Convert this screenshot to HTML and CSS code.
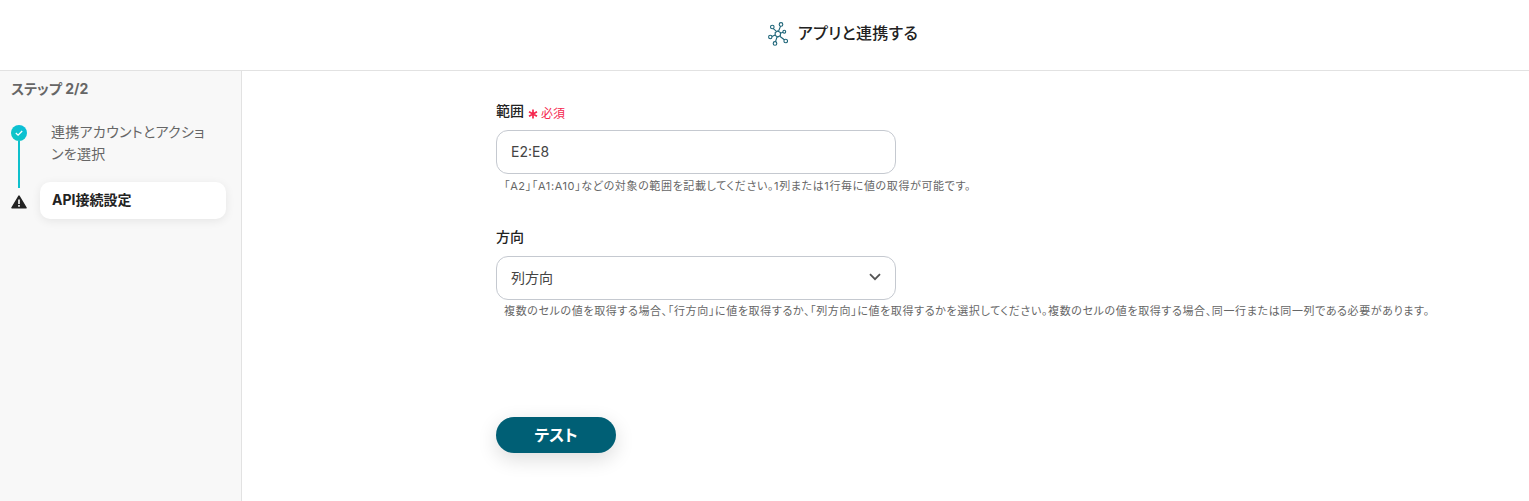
FILE: index.html
```html
<!DOCTYPE html>
<html lang="ja">
<head>
   <meta charset="UTF-8">
   <title>アプリと連携する</title>
   <link rel="stylesheet" href="styles.css">
</head>
<body>
   <header class="header">
       <svg class="header-icon" width="20" height="24" viewBox="0 0 20 24" fill="none" stroke="#1d6478" stroke-width="1.1">
           <path d="M9.8 9 12.4 10.5V13.5L9.8 15 7.2 13.5V10.5Z"/>
           <circle cx="13" cy="2.4" r="1.8"/>
           <circle cx="4.3" cy="5" r="1.8"/>
           <circle cx="16.3" cy="9.7" r="1.4"/>
           <circle cx="17.7" cy="19" r="1.8"/>
           <circle cx="7" cy="21.4" r="1.8"/>
           <circle cx="2.3" cy="15" r="1.7"/>
           <path d="M10.6 9 12.6 4.1M8.5 9.4 5.3 6.6M12.4 11.2 15 10.2M11.8 14.2 16.3 17.8M9 15 7.5 19.7M7.2 13 3.9 14.5"/>
       </svg>
       <span class="header-title">アプリと連携する</span>
   </header>
   <div class="page">
       <aside class="sidebar">
           <div class="step-count">ステップ 2/2</div>
           <ol class="steps">
               <li class="step step-done">
                   <span class="step-mark">
                       <svg width="16" height="16" viewBox="0 0 16 16">
                           <defs>
                               <linearGradient id="done-fill" x1="0" y1="1" x2="1" y2="0">
                                   <stop offset="0" stop-color="#0cc8c0"/>
                                   <stop offset="1" stop-color="#0cbcdc"/>
                               </linearGradient>
                           </defs>
                           <circle cx="8" cy="8" r="8" fill="url(#done-fill)"/>
                           <path d="M4.8 8 7.1 10.2 11.2 6" fill="none" stroke="#fff" stroke-width="1.3"/>
                       </svg>
                   </span>
                   <span class="step-label">連携アカウントとアクションを選択</span>
               </li>
               <li class="step step-current">
                   <span class="step-mark">
                       <svg width="16" height="14" viewBox="0 0 16 14">
                           <path d="M8 1.2 15 12.8H1Z" fill="#222" stroke="#222" stroke-width="1.6" stroke-linejoin="round"/>
                           <path d="M7.2 4.4h1.6v4.6H7.2zM7.2 10h1.6v1.7H7.2z" fill="#fff"/>
                       </svg>
                   </span>
                   <span class="step-label">API接続設定</span>
               </li>
           </ol>
       </aside>
       <main class="main">
           <div class="field">
               <div class="field-label">範囲
                   <svg class="required-mark" width="10" height="10" viewBox="0 0 10 10" fill="none" stroke="#f5284f" stroke-width="1.7"><path d="M5 .5v9M1 2.7l8 4.6M9 2.7 1 7.3"/></svg>
                   <span class="required">必須</span>
               </div>
               <div class="control">E2:E8</div>
               <p class="help help-range">「A2」「A1:A10」などの対象の範囲を記載してください。1列または1行毎に値の取得が可能です。</p>
           </div>
           <div class="field field-direction">
               <div class="field-label">方向</div>
               <div class="control control-select">
                   <span>列方向</span>
                   <svg width="12" height="8" viewBox="0 0 12 8" fill="none" stroke="#555" stroke-width="1.8"><path d="M1 1.2 6 6.2 11 1.2"/></svg>
               </div>
               <p class="help">複数のセルの値を取得する場合、「行方向」に値を取得するか、「列方向」に値を取得するかを選択してください。複数のセルの値を取得する場合、同一行または同一列である必要があります。</p>
           </div>
           <button class="test-button">テスト</button>
       </main>
   </div>
</body>
</html>
```
FILE: styles.css
```css
* {
    box-sizing: border-box;
}
body {
    margin: 0;
    height: 501px;
    overflow: hidden;
    background: #fff;
    color: #222;
    font-family: "Inter", "Noto Sans CJK JP", sans-serif;
    font-feature-settings: "palt";
}
.header {
    height: 71px;
    border-bottom: 1px solid #e2e2e2;
    display: flex;
    align-items: center;
    justify-content: center;
    gap: 10px;
    padding: 0 0 3px 157px;
}
.header-title {
    padding-bottom: 4px;
    font-size: 16px;
    font-weight: 500;
    letter-spacing: 0.02em;
}
.page {
    display: flex;
    height: 430px;
}
.sidebar {
    width: 242px;
    flex: none;
    background: #f8f8f8;
    border-right: 1px solid #e2e2e2;
    padding: 9px 15px 0 11px;
}
.step-count {
    font-size: 14px;
    font-weight: 700;
    line-height: 18px;
    color: #666;
}
.steps {
    list-style: none;
    margin: 22px 0 0;
    padding: 0;
}
.step {
    display: flex;
    position: relative;
}
.step-mark {
    width: 29px;
    flex: none;
    display: flex;
    padding-top: 5px;
}
.step-done {
    height: 62px;
}
.step-done::after {
    content: "";
    position: absolute;
    left: 7px;
    top: 21px;
    width: 2px;
    height: 47px;
    background: #0fc0cc;
}
.step-done .step-label {
    padding: 0 11px;
    font-size: 14px;
    line-height: 22px;
    letter-spacing: 0.02em;
    color: #666;
    margin-top: 1px;
}
.step-current {
    align-items: center;
    height: 37px;
}
.step-current .step-mark {
    padding-top: 2px;
}
.step-current .step-label {
    flex: 1;
    height: 37px;
    display: flex;
    align-items: center;
    padding: 0 12px 4px;
    background: #fff;
    border-radius: 10px;
    box-shadow: 0 2px 10px rgba(0, 0, 0, 0.08);
    font-size: 14px;
    font-weight: 700;
}
.main {
    flex: 1;
    padding: 31px 0 0 254px;
}
.field-label {
    display: flex;
    align-items: center;
    gap: 4px;
    height: 20px;
    padding-bottom: 4px;
    font-size: 14px;
    font-weight: 500;
}
.required {
    margin: 4px 0 0 -1px;
    color: #f5284f;
    font-size: 12px;
    font-weight: 400;
}
.required-mark {
    margin-top: 8px;
}
.control {
    width: 400px;
    height: 44px;
    margin-top: 8px;
    padding: 0 14px 2px;
    display: flex;
    align-items: center;
    justify-content: space-between;
    border: 1px solid #c5c9d0;
    border-radius: 12px;
    font-size: 14px;
    color: #444;
}
.help {
    margin: 4px 0 0 8px;
    font-size: 11px;
    line-height: 15px;
    letter-spacing: 0.057em;
    color: #666;
    white-space: nowrap;
}
.help-range {
    margin-top: 5px;
}
.field-direction {
    margin-top: 34px;
}
.test-button {
    display: block;
    margin-top: 98px;
    width: 120px;
    height: 36px;
    padding: 0 0 2px;
    border: 0;
    border-radius: 18px;
    background: #005f75;
    color: #fff;
    font-family: inherit;
    font-feature-settings: inherit;
    font-size: 16px;
    font-weight: 700;
    box-shadow: 0 6px 20px rgba(0, 0, 0, 0.14);
}
```
